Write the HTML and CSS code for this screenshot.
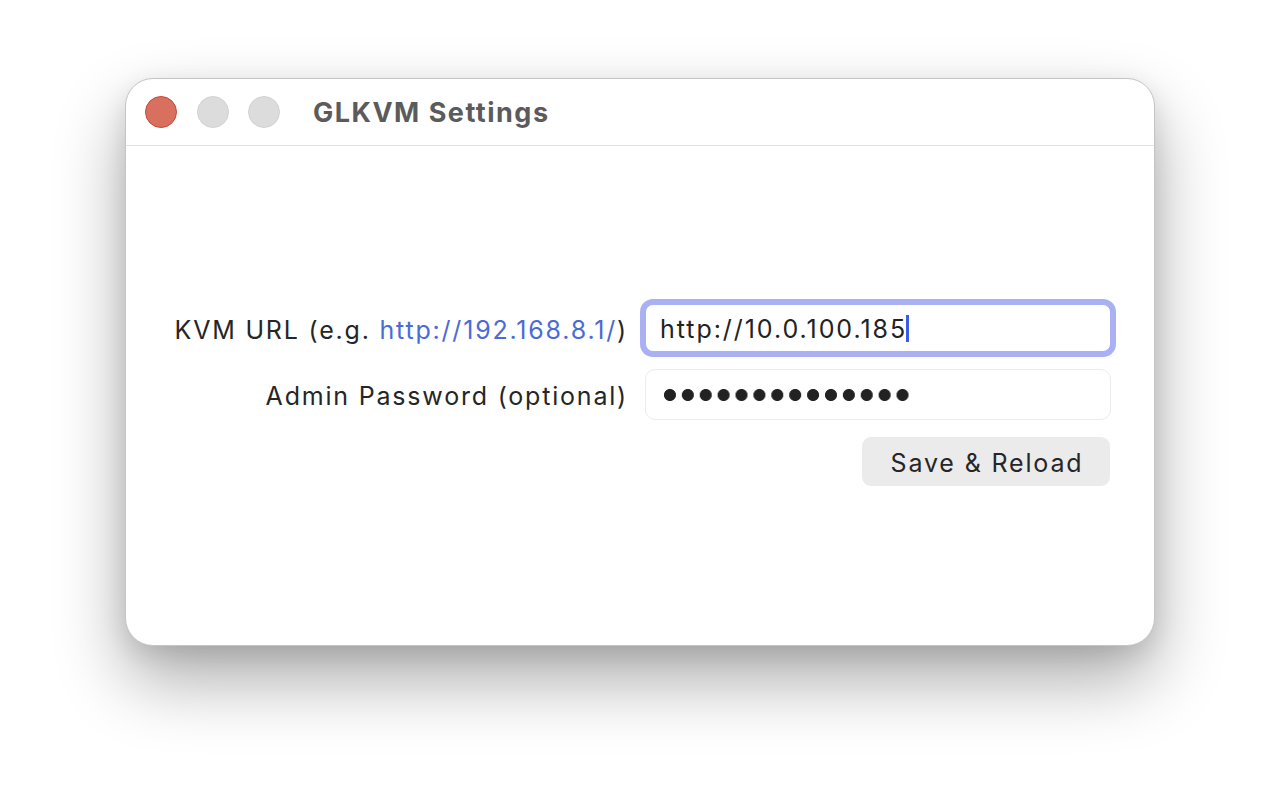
FILE: index.html
```html
<!DOCTYPE html>
<html lang="en">
<head>
<meta charset="utf-8">
<title>GLKVM Settings</title>
<link rel="stylesheet" href="styles.css">
</head>
<body>
<div class="window">
  <div class="titlebar">
    <div class="lights">
      <span class="light close"></span>
      <span class="light"></span>
      <span class="light"></span>
    </div>
    <div class="title">GLKVM Settings</div>
  </div>
  <div class="content">
    <div class="form">
      <div class="label">KVM URL (e.g. <span class="link">http://192.168.8.1/</span>)</div>
      <div class="field focused"><span class="value">http://10.0.100.185</span><span class="caret"></span></div>
      <div class="label">Admin Password (optional)</div>
      <div class="field"><span class="dots"></span></div>
      <div class="actions"><button class="btn" type="button">Save &amp; Reload</button></div>
    </div>
  </div>
</div>
</body>
</html>
```
FILE: styles.css
```css
html, body {
  margin: 0;
  padding: 0;
  background: #ffffff;
}
body {
  width: 1280px;
  height: 800px;
  overflow: hidden;
  font-family: Inter, "Open Sans", "Liberation Sans", sans-serif;
  color: #262626;
}
.window {
  margin: 78px 0 0 125px;
  width: 1030px;
  height: 568px;
  box-sizing: border-box;
  background: #ffffff;
  border-radius: 28px;
  border: 1px solid #c4c4c4;
  box-shadow: 0 34px 70px rgba(0, 0, 0, 0.33), 0 8px 24px rgba(0, 0, 0, 0.10);
  display: flex;
  flex-direction: column;
  overflow: hidden;
}
.titlebar {
  height: 66px;
  border-bottom: 1px solid #e2e2e2;
  display: flex;
  align-items: center;
  padding-left: 19px;
  flex-shrink: 0;
}
.lights {
  display: flex;
  gap: 19.5px;
}
.light {
  width: 32px;
  height: 32px;
  border-radius: 50%;
  background: #dcdcdc;
  box-sizing: border-box;
  border: 1px solid #d2d2d2;
}
.light.close {
  background: #d9705f;
  border-color: #c54a3a;
}
.title {
  margin-left: 33px;
  padding-top: 1px;
  font-weight: 700;
  font-size: 27px;
  color: #5b5b5b;
  letter-spacing: 1.5px;
}
.content {
  flex: 1;
  display: flex;
  flex-direction: column;
  padding: 158px 43px 0 0;
}
.form {
  display: grid;
  grid-template-columns: auto 466px;
  column-gap: 19px;
  row-gap: 17px;
  justify-content: end;
  align-items: center;
}
.label {
  text-align: right;
  font-size: 25px;
  letter-spacing: 1.8px;
  color: #262626;
  white-space: nowrap;
  margin-right: -2px;
  padding-top: 3px;
}
.link {
  color: #4a6bd6;
}
.field {
  height: 51px;
  box-sizing: border-box;
  border: 1px solid #ececec;
  border-radius: 10px;
  background: #fff;
  display: flex;
  align-items: center;
  padding-left: 14px;
  padding-top: 2px;
  font-size: 25px;
  letter-spacing: 1.95px;
  color: #222;
}
.field.focused {
  height: 48px;
  border-color: #a9b0f4;
  box-shadow: 0 0 0 5px #a9b0f4;
  border-radius: 8px;
}
.caret {
  display: inline-block;
  width: 3px;
  height: 27px;
  background: #3b5ce4;
  margin-left: -1px;
  margin-top: -2px;
}
.dots {
  display: block;
  width: 251px;
  height: 18px;
  margin-left: 1px;
  margin-top: -2px;
  background-image: radial-gradient(circle, #222 5.6px, transparent 6.4px);
  background-size: 17.9px 18px;
  background-repeat: repeat-x;
}
.actions {
  grid-column: 2;
  display: flex;
  justify-content: flex-end;
}
.btn {
  width: 248px;
  height: 49px;
  border: none;
  border-radius: 9px;
  background: #ebebeb;
  font-family: inherit;
  font-size: 25px;
  letter-spacing: 1.85px;
  color: #262626;
  padding: 2px 0 0 2px;
  margin-right: 1px;
}
```
